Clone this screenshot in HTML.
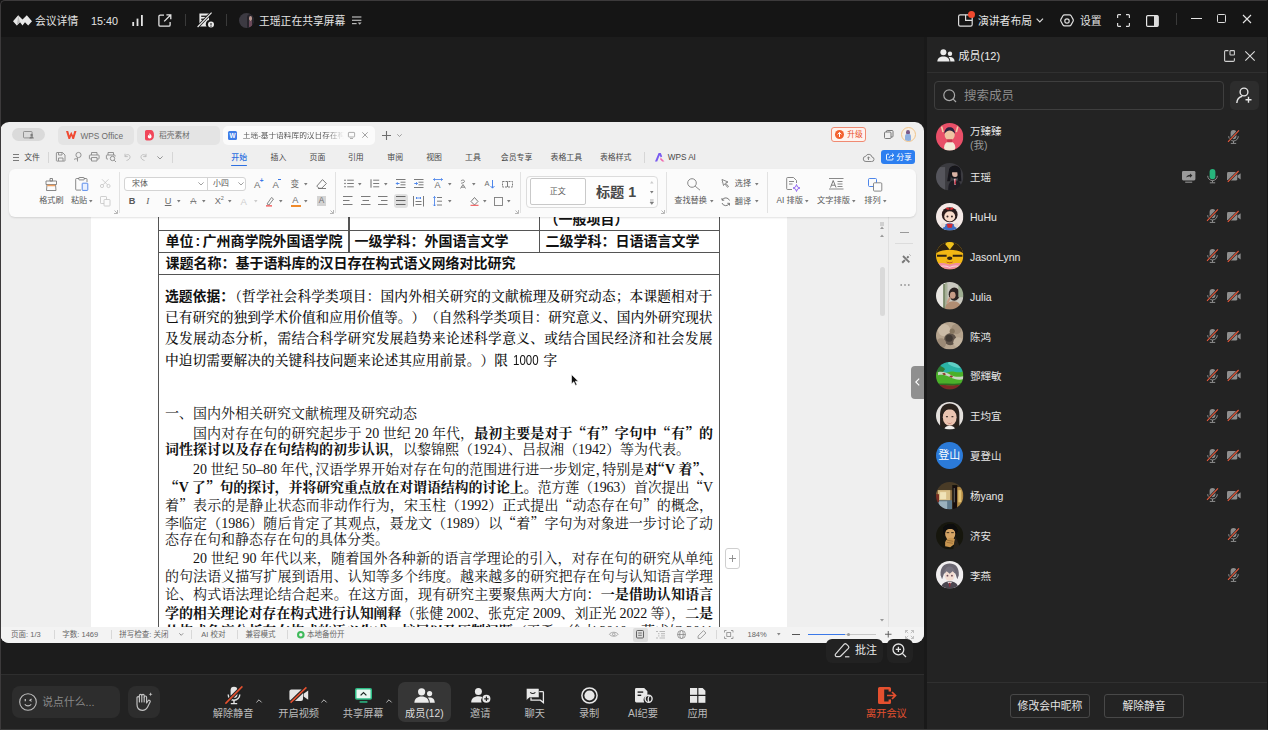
<!DOCTYPE html>
<html lang="zh-CN">
<head>
<meta charset="utf-8">
<title>腾讯会议</title>
<style>
*{box-sizing:border-box;margin:0;padding:0}
html,body{width:1268px;height:730px;overflow:hidden;background:#1c1c1c}
body{position:relative;font-family:"Liberation Sans","Noto Sans CJK SC",sans-serif;color:#e6e6e6;font-size:11px;line-height:1}
.abs{position:absolute}
svg{position:absolute;overflow:visible}
.t{position:absolute;white-space:nowrap;line-height:1}
/* ---------- meeting chrome ---------- */
#topbar{position:absolute;left:0;top:0;width:1268px;height:37px;background:#151515}
#stage{position:absolute;left:0;top:37px;width:926px;height:637px;background:#1c1c1c}
#toolbar{position:absolute;left:0;top:674px;width:926px;height:56px;background:#222222;border-top:1px solid #2e2e2e}
#panel{position:absolute;left:926px;top:37px;width:342px;height:693px;background:#232323}
#frame{position:absolute;left:0;top:0;width:1268px;height:730px;border:1px solid #3c3a3b;border-right:1.500px solid #161616;border-bottom:1.500px solid #3a3a3a;border-radius:5px 2px 0 0;pointer-events:none;z-index:50}
.sep{position:absolute;width:1px;background:#3a3a3a}
/* ---------- WPS window ---------- */
.q{font-family:"Noto Serif CJK SC",serif}
.ln b{font-weight:700}
#wps{position:absolute;left:0;top:122px;width:924px;height:521px;background:#efefef;border-radius:9px;overflow:hidden;color:#484848}
</style>
</head>
<body>
<div id="topbar">
<!-- logo -->
<svg style="left:13px;top:15px" width="19" height="11" viewBox="0 0 19 11"><path d="M0 6.2 L5.2 0.3 L9.5 4.6 L13.8 0.3 L19 6.2 L15.2 10.4 L12 7.2 L9.5 10.4 L7 7.2 L3.8 10.4 Z" fill="#e8e8e8"/><path d="M5.2 0.3 L7 7.2 L3.8 10.4Z" fill="#bdbdbd"/></svg>
<span class="t" style="left:35px;top:16px;font-size:10.8px;color:#e4e4e4">会议详情</span>
<span class="t" style="left:91px;top:16px;font-size:10.8px;color:#e4e4e4">15:40</span>
<!-- signal -->
<svg style="left:132px;top:15px" width="12" height="11" viewBox="0 0 12 11"><rect x="0.3" y="7" width="1.8" height="4" fill="#e4e4e4"/><rect x="4.6" y="3.6" width="1.8" height="7.4" fill="#e4e4e4"/><rect x="9" y="0" width="1.8" height="11" fill="#e4e4e4"/></svg>
<!-- external -->
<svg style="left:158px;top:14px" width="14" height="13" viewBox="0 0 14 13" fill="none" stroke="#e4e4e4" stroke-width="1.3"><path d="M6 1.2H2.2a1.3 1.3 0 0 0-1.3 1.3v8.4a1.3 1.3 0 0 0 1.3 1.3h8.6a1.3 1.3 0 0 0 1.3-1.3V8"/><path d="M6.2 7.4 12.6 1M8.4 0.8h4.4v4.4"/></svg>
<div class="sep" style="left:185px;top:14px;height:12px"></div>
<!-- recording off -->
<svg style="left:197px;top:12px" width="18" height="16" viewBox="0 0 18 16"><path d="M2.4 1.5h9.6v6.6a4 4 0 0 0-2.4 6.4H2.4z" fill="#e8e8e8"/><rect x="4.2" y="3.6" width="6" height="1.3" fill="#151515"/><rect x="4.2" y="6.6" width="4" height="1.3" fill="#151515"/><circle cx="14" cy="12.6" r="3" fill="#e8e8e8"/><path d="M14 11v2.2" stroke="#151515" stroke-width="1"/><circle cx="14" cy="14.2" r="0.6" fill="#151515"/><path d="M0.6 15 14.6 0.6" stroke="#151515" stroke-width="2.8"/><path d="M0.6 15 14.6 0.6" stroke="#e8e8e8" stroke-width="1.2"/></svg>
<div class="sep" style="left:226px;top:14px;height:12px"></div>
<!-- sharer avatar -->
<div class="abs" style="left:239px;top:13px;width:15px;height:15px;border-radius:50%;background:#3c3a42;overflow:hidden"><div class="abs" style="left:8px;top:1px;width:7px;height:15px;background:#26242b;border-radius:4px 4px 0 0"></div><div class="abs" style="left:9.5px;top:3px;width:3.5px;height:4.5px;background:#b9968f;border-radius:50%"></div><div class="abs" style="left:10px;top:8px;width:3px;height:6px;background:#6b4a5a"></div></div>
<span class="t" style="left:259px;top:16px;font-size:10.8px;color:#e4e4e4">王瑶正在共享屏幕</span>
<svg style="left:352px;top:16px" width="10" height="9" viewBox="0 0 10 9"><rect x="0" y="0.4" width="9.4" height="1.2" fill="#bbb"/><rect x="0" y="3.7" width="9.4" height="1.2" fill="#bbb"/><rect x="0" y="7" width="4.6" height="1.2" fill="#bbb"/><path d="M5.8 6.4h3.8L7.7 8.8z" fill="#bbb"/></svg>

<!-- right cluster -->
<svg style="left:958px;top:14px" width="15" height="13" viewBox="0 0 15 13" fill="none" stroke="#dcdcdc" stroke-width="1.2"><rect x="0.6" y="0.8" width="13.6" height="11.4" rx="1.6"/><path d="M7.6 0.8v5.6h6.6"/></svg>
<div class="abs" style="left:967.5px;top:11px;width:7px;height:7px;border-radius:50%;background:#f0492f"></div>
<span class="t" style="left:978px;top:16px;font-size:10.8px;color:#e4e4e4">演讲者布局</span>
<svg style="left:1036px;top:18px" width="8" height="5" viewBox="0 0 8 5" fill="none" stroke="#dcdcdc" stroke-width="1.2"><path d="M0.6 0.6 3.8 3.8 7 0.6"/></svg>
<!-- gear -->
<svg style="left:1060px;top:13.5px" width="14" height="14" viewBox="0 0 14 14" fill="none" stroke="#dcdcdc" stroke-width="1.2"><path d="M4.6 0.8h4.8a2 2 0 0 1 1.7 1l2 3.6a2 2 0 0 1 0 1.9l-2 3.6a2 2 0 0 1-1.7 1H4.6a2 2 0 0 1-1.7-1l-2-3.6a2 2 0 0 1 0-1.9l2-3.6a2 2 0 0 1 1.7-1z"/><circle cx="7" cy="7" r="2.2"/></svg>
<span class="t" style="left:1080px;top:16px;font-size:10.8px;color:#e4e4e4">设置</span>
<!-- fullscreen -->
<svg style="left:1117px;top:14px" width="13" height="13" viewBox="0 0 13 13" fill="none" stroke="#dcdcdc" stroke-width="1.2"><path d="M0.6 4V1.4a.8.8 0 0 1 .8-.8H4M9 .6h2.6a.8.8 0 0 1 .8.8V4M12.4 9v2.6a.8.8 0 0 1-.8.8H9M4 12.4H1.4a.8.8 0 0 1-.8-.8V9"/></svg>
<!-- side panel icon -->
<svg style="left:1146px;top:14.5px" width="13" height="12" viewBox="0 0 13 12"><rect x="0.6" y="0.6" width="11.6" height="10.8" rx="1.2" fill="none" stroke="#e8e8e8" stroke-width="1.2"/><path d="M8 0.6h3a1.2 1.2 0 0 1 1.2 1.2v8.4a1.2 1.2 0 0 1-1.2 1.2H8z" fill="#dcdcdc"/></svg>
<div class="sep" style="left:1176px;top:13px;height:12px"></div>
<div class="abs" style="left:1191px;top:18px;width:11px;height:1px;background:#e4e4e4"></div>
<div class="abs" style="left:1217px;top:14px;width:9px;height:9px;border:1.2px solid #dcdcdc;border-radius:1.5px"></div>
<svg style="left:1243px;top:15px" width="8" height="8" viewBox="0 0 8 8" stroke="#e4e4e4" stroke-width="1.1"><path d="M0 0 8 8M8 0 0 8"/></svg>
</div>
<div id="stage"></div>
<!--TB-->
<div id="toolbar">
<div class="abs" style="left:12px;top:11px;width:108px;height:32px;background:#2d2d2d;border-radius:8px"></div>
<svg style="left:19px;top:17.799999999999955px" width="18" height="18" viewBox="0 0 18 18" fill="none" stroke="#bdbdbd" stroke-width="1.100"><circle cx="9" cy="9" r="8.300"/><path d="M6.300 6v2.200" stroke-width="1.300"/><path d="M12.600 6 10.800 7.200 12.600 8.400"/><path d="M5.800 11.200c1.600 2.200 4.800 2.200 6.400 0"/></svg>
<span class="t" style="left:42.300px;top:22.100000000000023px;font-size:10.800px;color:#8a8a8a">说点什么...</span>
<div class="abs" style="left:127.700px;top:11px;width:32px;height:32px;background:#2d2d2d;border-radius:8px"></div>
<svg style="left:136.400px;top:17.299999999999955px" width="17" height="19" viewBox="0 0 17 19" fill="none" stroke="#c4c4c4" stroke-width="1.150" stroke-linejoin="round" stroke-linecap="round"><path d="M1 11.500V5.800a1.200 1.200 0 0 1 2.400 0V3.600a1.200 1.200 0 0 1 2.400 0a1.200 1.200 0 0 1 2.400 0V5.200a1.200 1.200 0 0 1 2.400 0V11l1.500-2.200a1.150 1.150 0 0 1 2 1.200l-2.500 5c-1 2-2.600 3.300-5.300 3.300C3 18.300 1 15.900 1 12.600z"/><path d="M3.400 6v4M5.800 3.800V10M8.200 5.400V10"/><path d="M14.600 0.300l.55 1.450 1.450.55-1.450.55-.55 1.450-.55-1.450-1.450-.55 1.450-.55z" fill="#c4c4c4" stroke="none"/></svg>
<svg style="left:224.500px;top:11.200000000000045px" width="18" height="19" viewBox="0 0 18 19"><rect x="5.600" y="0.800" width="6.800" height="11" rx="3.400" fill="#e4e4e4"/><path d="M3.200 8.400a5.800 5.800 0 0 0 11.600 0" fill="none" stroke="#e4e4e4" stroke-width="1.400"/><path d="M9 14.400v3M5.800 17.600h6.400" stroke="#e4e4e4" stroke-width="1.400"/><path d="M0.400 17.600 17.400 0.400" stroke="#222" stroke-width="3.600"/><path d="M0.400 17.600 17.400 0.400" stroke="#e5502f" stroke-width="1.500"/></svg>
<span class="t" style="left:193.1px;width:80px;text-align:center;top:33.7px;font-size:10.200px;color:#bcbcbc">解除静音</span>
<svg style="left:256px;top:24px" width="6" height="4" viewBox="0 0 6 4" fill="none" stroke="#bdbdbd" stroke-width="1"><path d="M0.400 3.400 3 0.800 5.600 3.400"/></svg>
<svg style="left:289px;top:12px" width="20" height="16" viewBox="0 0 20 16"><rect x="0.400" y="2.400" width="13.600" height="11.600" rx="2" fill="#e4e4e4"/><path d="M14.600 6.800 19.200 3.600v9.200l-4.600-3.200z" fill="#e4e4e4"/><path d="M1.600 15.600 17.400 0.400" stroke="#222" stroke-width="3.600"/><path d="M1.600 15.600 17.400 0.400" stroke="#e5502f" stroke-width="1.500"/></svg>
<span class="t" style="left:258.7px;width:80px;text-align:center;top:33.7px;font-size:10.200px;color:#bcbcbc">开启视频</span>
<svg style="left:320.8px;top:24px" width="6" height="4" viewBox="0 0 6 4" fill="none" stroke="#bdbdbd" stroke-width="1"><path d="M0.400 3.400 3 0.800 5.600 3.400"/></svg>
<svg style="left:355.300px;top:13px" width="17" height="15" viewBox="0 0 17 15"><rect x="0" y="0" width="17" height="11.800" rx="1.800" fill="#2dbd86"/><rect x="1.500" y="1.500" width="14" height="8.800" rx=".6" fill="#e9f7f1"/><path d="M5.600 7.400 8.500 4.600 11.400 7.400" fill="none" stroke="#1f2a26" stroke-width="1.300"/><rect x="4.600" y="13.200" width="7.800" height="1.500" fill="#2dbd86"/></svg>
<span class="t" style="left:323.2px;width:80px;text-align:center;top:33.7px;font-size:10.200px;color:#bcbcbc">共享屏幕</span>
<svg style="left:386px;top:24px" width="6" height="4" viewBox="0 0 6 4" fill="none" stroke="#bdbdbd" stroke-width="1"><path d="M0.400 3.400 3 0.800 5.600 3.400"/></svg>
<div class="abs" style="left:398px;top:7px;width:53.300px;height:39.600px;background:#363636;border-radius:7px"></div>
<svg style="left:414px;top:13px" width="21" height="15" viewBox="0 0 21 15"><circle cx="7.600" cy="3.800" r="3.600" fill="#ececec"/><path d="M0.400 14.800c0-4 3-6.200 7.200-6.200s7.200 2.200 7.200 6.200z" fill="#ececec"/><circle cx="15.600" cy="5.600" r="2.600" fill="#ececec"/><path d="M15.800 14.800c0-2.400-.7-4-2-5.100.6-.2 1.100-.3 1.800-.3 3 0 5.200 1.800 5.200 5.400z" fill="#ececec"/></svg>
<span class="t" style="left:384.3px;width:80px;text-align:center;top:33.7px;font-size:10.200px;color:#dcdcdc">成员(12)</span>
<svg style="left:471px;top:13.399999999999977px" width="20" height="15" viewBox="0 0 20 15"><circle cx="7.400" cy="3.600" r="3.500" fill="#e8e8e8"/><path d="M0.200 14.400c0-4 3-6.200 7.200-6.200 1.500 0 2.800.3 3.900.8a5.400 5.400 0 0 0-.7 5.400z" fill="#e8e8e8"/><circle cx="15.400" cy="10.800" r="4" fill="#e8e8e8"/><circle cx="15.400" cy="10.800" r="4" fill="none" stroke="#222" stroke-width="0"/><path d="M15.400 8.600v4.400M13.200 10.800h4.400" stroke="#222" stroke-width="1.200"/></svg>
<span class="t" style="left:440.3px;width:80px;text-align:center;top:33.7px;font-size:10.200px;color:#bcbcbc">邀请</span>
<svg style="left:526px;top:13.399999999999977px" width="18" height="15" viewBox="0 0 18 15"><path d="M5 3.600h11.600a.8.800 0 0 1 .8.800v10.200l-3-2.400H5z" fill="none" stroke="#e8e8e8" stroke-width="1.300"/><path d="M0.400 1.200a.8.800 0 0 1 .8-.8h11a.8.800 0 0 1 .8.800v8.400H3.600l-3.200 2.600z" fill="#e8e8e8" stroke="#222" stroke-width=".5"/><path d="M4.200 4.400c1.600 1.400 3.600 1.400 5.200 0" fill="none" stroke="#222" stroke-width="1.100"/></svg>
<span class="t" style="left:494.8px;width:80px;text-align:center;top:33.7px;font-size:10.200px;color:#bcbcbc">聊天</span>
<svg style="left:580.600px;top:12.399999999999977px" width="17" height="17" viewBox="0 0 17 17"><circle cx="8.500" cy="8.500" r="7.600" fill="none" stroke="#e8e8e8" stroke-width="1.500"/><circle cx="8.500" cy="8.500" r="5.100" fill="#e8e8e8"/></svg>
<span class="t" style="left:549.1px;width:80px;text-align:center;top:33.7px;font-size:10.200px;color:#bcbcbc">录制</span>
<svg style="left:635px;top:13.399999999999977px" width="18" height="15" viewBox="0 0 18 15"><path d="M1.400 0h7.800l3.200 3.200v4a4.800 4.800 0 0 0-3.200 7.200H1.400A1.400 1.400 0 0 1 0 13V1.400A1.400 1.400 0 0 1 1.400 0z" fill="#e8e8e8"/><rect x="2.600" y="3.400" width="5.600" height="1.400" fill="#222"/><rect x="2.600" y="6.600" width="3.600" height="1.400" fill="#222"/><circle cx="13.600" cy="10.800" r="3.500" fill="none" stroke="#e8e8e8" stroke-width="1.400"/><path d="M14.600 7.600c-1.600 1.800-1.600 4.600-.6 6.600" fill="none" stroke="#e8e8e8" stroke-width="1.300"/></svg>
<span class="t" style="left:603.0px;width:80px;text-align:center;top:33.7px;font-size:10.200px;color:#bcbcbc">AI纪要</span>
<svg style="left:690.200px;top:13.399999999999977px" width="16" height="15" viewBox="0 0 16 15"><rect x="0" y="0" width="7.200" height="6.800" fill="#e8e8e8"/><path d="M8.400 0h4.200L15.400 2.800v4H8.400z" fill="#e8e8e8"/><rect x="0" y="8" width="7.200" height="6.800" fill="#e8e8e8"/><rect x="8.400" y="8" width="7" height="6.800" fill="#e8e8e8"/></svg>
<span class="t" style="left:657.6px;width:80px;text-align:center;top:33.7px;font-size:10.200px;color:#bcbcbc">应用</span>
<svg style="left:878px;top:12.399999999999977px" width="19" height="17" viewBox="0 0 19 17"><path d="M1.600 0h9.800a1.600 1.600 0 0 1 1.600 1.600V4.400h-2.400V2.400H6.200v12.200h4.400V12.600H13v2.800a1.600 1.600 0 0 1-1.600 1.600H1.600A1.600 1.600 0 0 1 0 15.400V1.600A1.600 1.600 0 0 1 1.600 0z" fill="#e5502f"/><path d="M9 8.500h8M14 5l3.500 3.500L14 12" fill="none" stroke="#e5502f" stroke-width="1.700"/></svg>
<span class="t" style="left:846.4px;width:80px;text-align:center;top:33.7px;font-size:10.200px;color:#e5502f">离开会议</span>
</div>
<div class="abs" style="left:825.500px;top:638.500px;width:57.500px;height:24.500px;background:#222;border-radius:6px;z-index:5"></div>
<svg style="left:833.500px;top:642.500px;z-index:6" width="17" height="16" viewBox="0 0 17 16" fill="none" stroke="#dcdcdc" stroke-width="1.200" stroke-linejoin="round"><path d="M10.200 1.200a1.600 1.600 0 0 1 2.200 0l2 2a1.600 1.600 0 0 1 0 2.200l-7.600 7.600a2 2 0 0 1-1.400.6H2.800a1.600 1.600 0 0 1-1.300-2.500z"/><path d="M11 13.800h4.400"/></svg>
<span class="t" style="left:855px;top:645px;font-size:11px;color:#ececec;z-index:6">批注</span>
<div class="abs" style="left:887px;top:638.500px;width:25.500px;height:24.500px;background:#222;border-radius:6px;z-index:5"></div>
<svg style="left:892px;top:643px;z-index:6" width="15" height="15" viewBox="0 0 15 15" fill="none" stroke="#e4e4e4" stroke-width="1.300"><circle cx="6.400" cy="6.400" r="5.400"/><path d="M10.400 10.400 14 14M6.400 3.800v5.200M3.800 6.400h5.200"/></svg>
<!--/TB-->
<!--PANEL-->
<div id="panel">
<svg style="left:11px;top:12px" width="18" height="13" viewBox="0 0 18 13"><circle cx="6.400" cy="3.300" r="3" fill="#ececec"/><path d="M0.300 12.600c0-3.400 2.600-5.200 6.100-5.200s6.100 1.800 6.100 5.200z" fill="#ececec"/><circle cx="13" cy="4.800" r="2.200" fill="#ececec"/><path d="M13.300 12.600c0-2-.6-3.400-1.700-4.300.5-.1.900-.2 1.500-.2 2.600 0 4.500 1.500 4.500 4.500z" fill="#ececec"/></svg>
<span class="t" style="left:32.500px;top:13.500px;font-size:11px;color:#ececec">成员(12)</span>
<svg style="left:298px;top:13px" width="11" height="12" viewBox="0 0 11 12" fill="none" stroke="#cfcfcf" stroke-width="1.100"><path d="M4.400 0.600H1.700A1.100 1.100 0 0 0 .6 1.700v8.600a1.100 1.100 0 0 0 1.100 1.100h7.600a1.100 1.100 0 0 0 1.100-1.100V8.200"/><rect x="6" y="0.600" width="4.400" height="4.400" rx=".6"/></svg>
<svg style="left:318.500px;top:14px" width="10" height="10" viewBox="0 0 10 10" stroke="#dcdcdc" stroke-width="1.100"><path d="M0.300 0.300 9.700 9.700M9.700 0.300 0.300 9.700"/></svg>
<div class="abs" style="left:0;top:35px;width:342px;height:1px;background:#303030"></div>
<div class="abs" style="left:8px;top:43.500px;width:290px;height:29.500px;border:1px solid #3e3e3e;border-radius:4px"></div>
<svg style="left:17px;top:52px" width="14" height="14" viewBox="0 0 14 14" fill="none" stroke="#a8a8a8" stroke-width="1.200"><circle cx="6.200" cy="6.200" r="5.400"/><path d="M10.200 10.200 13 13"/></svg>
<span class="t" style="left:38px;top:52.500px;font-size:12.500px;color:#8c8c8c">搜索成员</span>
<div class="abs" style="left:303.500px;top:44px;width:29px;height:29px;background:#2d2d2d;border-radius:5px"></div>
<svg style="left:310px;top:50px" width="17" height="17" viewBox="0 0 17 17" fill="none" stroke="#e6e6e6" stroke-width="1.400"><circle cx="8" cy="5" r="3.900"/><path d="M0.800 16c.3-3.600 2.300-6 5.400-6.700"/><path d="M12.500 9.800v6M9.500 12.800h6"/></svg>
<svg width="0" height="0" style="left:0;top:0"><defs>
<g id="micoff"><rect x="2.600" y="0" width="5.800" height="9.200" rx="2.900" fill="#8f8f8f"/><path d="M0.700 6.200a4.800 4.800 0 0 0 9.600 0" fill="none" stroke="#8f8f8f" stroke-width="1"/><path d="M5.500 11v2.200M2.800 13.400h5.400" stroke="#8f8f8f" stroke-width="1"/><path d="M0 11.800 11 0.300" stroke="#232323" stroke-width="2.400"/><path d="M0 11.800 11 0.300" stroke="#ea5a3c" stroke-width="1.100"/></g>
<g id="micon"><rect x="2.600" y="0" width="5.800" height="10.200" rx="2.900" fill="#27b47c"/><path d="M0.700 6.800a4.800 4.800 0 0 0 9.600 0" fill="none" stroke="#8f8f8f" stroke-width="1"/><path d="M5.500 11.600v2M2.800 13.800h5.400" stroke="#8f8f8f" stroke-width="1"/></g>
<g id="camoff"><rect x="0" y="1" width="10.200" height="8.600" rx="1.400" fill="#8f8f8f"/><path d="M10.600 4.400 13.600 2.200v6.200l-3-2.200z" fill="#8f8f8f"/><path d="M0.800 10.800 11.600 0" stroke="#232323" stroke-width="2.400"/><path d="M0.800 10.800 11.600 0" stroke="#ea5a3c" stroke-width="1.100"/></g>
<g id="shareic"><rect x="0" y="0" width="13.400" height="9.400" rx="1.300" fill="#9a9a9a"/><rect x="3.200" y="10.600" width="7" height="1.200" fill="#8a8a8a"/><path d="M4.200 6.600c.6-2 2-2.800 3.800-2.800V2.400l2.400 2.200L8 6.800V5.400c-1.500 0-2.700.2-3.800 1.200z" fill="#2a2a2a"/></g>
<filter id="soft" x="-10%" y="-10%" width="120%" height="120%"><feGaussianBlur stdDeviation="0.55"/></filter>
</defs></svg>
<svg style="left:9.500px;top:85.8px" width="27.400" height="27.400" viewBox="0 0 27 27"><clipPath id="c0"><circle cx="13.500" cy="13.500" r="13.500"/></clipPath><g clip-path="url(#c0)"><g ><rect width="27" height="27" fill="#e94f68"/><ellipse cx="13.5" cy="24" rx="5.5" ry="6" fill="#f3ead8"/><path d="M7 9 5.5 3.5M20 9 21.5 3.5" stroke="#f0c9a8" stroke-width="1.6"/><ellipse cx="13.5" cy="11.5" rx="5" ry="5.6" fill="#efc4a2"/><path d="M8.3 10.5c0-4.4 2.4-6.3 5.2-6.3s5.2 1.9 5.2 6.3c-1.8-2.6-3.4-3.2-5.2-3.2s-3.4.6-5.2 3.2z" fill="#2d2340"/><rect x="11" y="16" width="5" height="3" fill="#c9384f"/></g></g></svg>
<span class="t" style="left:44px;top:88.5px;font-size:10.500px;color:#e6e6e6">万臻臻</span>
<span class="t" style="left:44px;top:102.5px;font-size:10.500px;color:#9a9a9a">(我)</span>
<svg style="left:302px;top:92.5px" width="11" height="14" viewBox="0 0 11 14"><use href="#micoff"/></svg>
<svg style="left:9.500px;top:125.7px" width="27.400" height="27.400" viewBox="0 0 27 27"><clipPath id="c1"><circle cx="13.500" cy="13.500" r="13.500"/></clipPath><g clip-path="url(#c1)"><g filter="url(#soft)"><rect width="27" height="27" fill="#3a3a40"/><rect x="0" y="4" width="9" height="23" fill="#55555c"/><path d="M12 27c0-7 2-10 6.5-10S25 20 25 27z" fill="#1d1c24"/><ellipse cx="18.5" cy="9" rx="5.6" ry="6.5" fill="#17151a"/><ellipse cx="18.8" cy="10" rx="3" ry="3.8" fill="#d9b3a5"/><path d="M17.6 15.5h2.4l-.5 6h-1.4z" fill="#e9e4e6"/><path d="M18.4 16h1l.4 4.5-.9 1-.9-1z" fill="#b0283c"/><path d="M13 6c1-4 9-4 11 0l1 12h-3l-1-9-6 0-1 9h-3z" fill="#17151a"/></g></g></svg>
<span class="t" style="left:44px;top:135.0px;font-size:10.500px;color:#e6e6e6">王瑶</span>
<svg style="left:255.800px;top:133.6px" width="14" height="12" viewBox="0 0 14 12"><use href="#shareic"/></svg>
<svg style="left:280.500px;top:132.0px" width="11" height="14" viewBox="0 0 11 14"><use href="#micon"/></svg>
<svg style="left:300.500px;top:134.0px" width="14" height="11" viewBox="0 0 14 11"><use href="#camoff"/></svg>
<svg style="left:9.500px;top:165.5px" width="27.400" height="27.400" viewBox="0 0 27 27"><clipPath id="c2"><circle cx="13.500" cy="13.500" r="13.500"/></clipPath><g clip-path="url(#c2)"><g ><rect width="27" height="27" fill="#f4e9e6"/><ellipse cx="13.5" cy="11.5" rx="7.8" ry="7.4" fill="#2a1c1c"/><ellipse cx="13.5" cy="13.2" rx="5.4" ry="5" fill="#f9dccb"/><path d="M9.6 5.2c1.4-1.8 2.8-.4 3.9.5 1.100-.9 2.500-2.300 3.900-.5-.5 1.700-2.200 1.700-3.900.9-1.700.8-3.400.8-3.900-.9z" fill="#d6282f"/><circle cx="11.300" cy="13.3" r="1" fill="#3a2a2a"/><circle cx="15.7" cy="13.3" r="1" fill="#3a2a2a"/><path d="M6.500 27c0-5 3-7 7-7s7 2 7 7z" fill="#3f6fc4"/><path d="M10.500 20.500h6l-1 4h-4z" fill="#d6282f"/><circle cx="7" cy="22" r="2.200" fill="#e8d9d4"/><circle cx="20" cy="22" r="2.200" fill="#e8d9d4"/></g></g></svg>
<span class="t" style="left:44px;top:174.8px;font-size:10.500px;color:#e6e6e6">HuHu</span>
<svg style="left:280.500px;top:172.2px" width="11" height="14" viewBox="0 0 11 14"><use href="#micoff"/></svg>
<svg style="left:300.500px;top:173.8px" width="14" height="11" viewBox="0 0 14 11"><use href="#camoff"/></svg>
<svg style="left:9.500px;top:205.4px" width="27.400" height="27.400" viewBox="0 0 27 27"><clipPath id="c3"><circle cx="13.500" cy="13.500" r="13.500"/></clipPath><g clip-path="url(#c3)"><g ><rect width="27" height="27" fill="#f2b714"/><path d="M0 0h27v11c-4-2.500-9-3.400-13.500-3.400S4 8.500 0 11z" fill="#2e2212"/><path d="M9 2 13.500 7.600 18 2l-2-2h-5z" fill="#f2c21c"/><path d="M1 12.500h9.500v2H1zM16.500 12.500H26v2h-9.500z" fill="#2e2212"/><ellipse cx="13.500" cy="16" rx="2.600" ry="1.700" fill="#2e2212"/><path d="M10 19c1.500 1.500 5.500 1.500 7 0-.5 2.500-6.500 2.500-7 0z" fill="#b4442a"/><path d="M0 22c4-2 9-1.500 13.500.3C18 20.500 23 20 27 22v5H0z" fill="#f08fa0"/><path d="M3 24.500c4-1.500 7-1 10.500.5 3.500-1.500 6.500-2 10.500-.5" stroke="#f8d5da" stroke-width="1" fill="none"/></g></g></svg>
<span class="t" style="left:44px;top:214.7px;font-size:10.500px;color:#e6e6e6">JasonLynn</span>
<svg style="left:280.500px;top:212.1px" width="11" height="14" viewBox="0 0 11 14"><use href="#micoff"/></svg>
<svg style="left:300.500px;top:213.7px" width="14" height="11" viewBox="0 0 14 11"><use href="#camoff"/></svg>
<svg style="left:9.500px;top:245.3px" width="27.400" height="27.400" viewBox="0 0 27 27"><clipPath id="c4"><circle cx="13.500" cy="13.500" r="13.500"/></clipPath><g clip-path="url(#c4)"><g filter="url(#soft)"><rect width="27" height="27" fill="#c9c8bf"/><rect x="0" y="0" width="9" height="27" fill="#e9e7e2"/><rect x="7" y="2" width="4" height="25" fill="#7d8b6c"/><rect x="9" y="0" width="2" height="27" fill="#a9b39a"/><ellipse cx="18" cy="12" rx="5.500" ry="6.500" fill="#2c2420"/><ellipse cx="16.500" cy="13" rx="2.800" ry="3.400" fill="#c79c86"/><path d="M9 27c0-5 3-8 8-8s8 3 8 8z" fill="#b08d72"/><rect x="22" y="3" width="5" height="12" fill="#9fae93"/><path d="M11 21l3-6" stroke="#c79c86" stroke-width="2"/></g></g></svg>
<span class="t" style="left:44px;top:254.6px;font-size:10.500px;color:#e6e6e6">Julia</span>
<svg style="left:280.500px;top:252.0px" width="11" height="14" viewBox="0 0 11 14"><use href="#micoff"/></svg>
<svg style="left:300.500px;top:253.6px" width="14" height="11" viewBox="0 0 14 11"><use href="#camoff"/></svg>
<svg style="left:9.500px;top:285.2px" width="27.400" height="27.400" viewBox="0 0 27 27"><clipPath id="c5"><circle cx="13.500" cy="13.500" r="13.500"/></clipPath><g clip-path="url(#c5)"><g filter="url(#soft)"><rect width="27" height="27" fill="#b6a48e"/><circle cx="8" cy="8" r="6" fill="#cbbba6"/><circle cx="20" cy="7" r="5" fill="#a3917c"/><circle cx="14" cy="17" r="6" fill="#5e5248"/><circle cx="13" cy="16" r="3.500" fill="#3f3832"/><circle cx="22" cy="20" r="5" fill="#c4b5a0"/><circle cx="5" cy="21" r="5" fill="#9c8a76"/><circle cx="16" cy="9" r="2.500" fill="#85745f"/></g></g></svg>
<span class="t" style="left:44px;top:294.5px;font-size:10.500px;color:#e6e6e6">陈鸿</span>
<svg style="left:280.500px;top:291.9px" width="11" height="14" viewBox="0 0 11 14"><use href="#micoff"/></svg>
<svg style="left:300.500px;top:293.5px" width="14" height="11" viewBox="0 0 14 11"><use href="#camoff"/></svg>
<svg style="left:9.500px;top:325.0px" width="27.400" height="27.400" viewBox="0 0 27 27"><clipPath id="c6"><circle cx="13.500" cy="13.500" r="13.500"/></clipPath><g clip-path="url(#c6)"><g filter="url(#soft)"><rect width="27" height="27" fill="#4bb02a"/><path d="M0 0h27v9c-5 3-10-1-15 1S4 8 0 6z" fill="#2bb3a6"/><path d="M12 0h15v5c-5 2-10 0-15-3z" fill="#5fd0c6"/><path d="M0 3c3 0 6 1 9 4l-3 4-6-2z" fill="#2f7d35"/><path d="M2 10c5-1 9 1 13 3s7 2 12 1v3c-5 1-9 0-13-2S7 12 2 13z" fill="#c9d6c4"/><path d="M6 11.500l2-1 2 1.500-2 1zM13 14l2-1 2 1.500-2 1z" fill="#8d3a2a"/><path d="M0 23c6-1 14 1 27-1v5H0z" fill="#7d2a25"/><path d="M0 21.500c8-1 16 1 27-1v1.500c-11 2-19 0-27 1z" fill="#2e6b23"/></g></g></svg>
<span class="t" style="left:44px;top:334.3px;font-size:10.500px;color:#e6e6e6">鄧輝敏</span>
<svg style="left:280.500px;top:331.7px" width="11" height="14" viewBox="0 0 11 14"><use href="#micoff"/></svg>
<svg style="left:300.500px;top:333.3px" width="14" height="11" viewBox="0 0 14 11"><use href="#camoff"/></svg>
<svg style="left:9.500px;top:364.9px" width="27.400" height="27.400" viewBox="0 0 27 27"><clipPath id="c7"><circle cx="13.500" cy="13.500" r="13.500"/></clipPath><g clip-path="url(#c7)"><g filter="url(#soft)"><rect width="27" height="27" fill="#e4e0dd"/><path d="M4 27V12C4 5 8 1.500 13.500 1.500S23 5 23 12v15z" fill="#2a211f"/><ellipse cx="13.500" cy="15" rx="6.800" ry="8.500" fill="#ecc4b0"/><path d="M6.500 13c0-6 3-8.500 7-8.500s7 2.500 7 8.500c-1.500-3.500-3-5.500-7-5.500s-5.500 2-7 5.500z" fill="#2a211f"/><ellipse cx="10.800" cy="14.500" rx="1.100" ry=".6" fill="#3b2a26"/><ellipse cx="16.200" cy="14.500" rx="1.100" ry=".6" fill="#3b2a26"/><path d="M11 20c1.500 1.300 3.500 1.300 5 0-.8 1.800-4.200 1.800-5 0z" fill="#b8564f"/><path d="M8 27c1-3 3-3.500 5.500-3.500S18 24 19 27z" fill="#f2eeea"/></g></g></svg>
<span class="t" style="left:44px;top:374.2px;font-size:10.500px;color:#e6e6e6">王均宜</span>
<svg style="left:280.500px;top:371.6px" width="11" height="14" viewBox="0 0 11 14"><use href="#micoff"/></svg>
<svg style="left:300.500px;top:373.2px" width="14" height="11" viewBox="0 0 14 11"><use href="#camoff"/></svg>
<div class="abs" style="left:9.500px;top:404.8px;width:27.400px;height:27.400px;border-radius:50%;background:#2b7ad8;color:#fff;font-size:11px;line-height:27.400px;text-align:center;letter-spacing:0">登山</div>
<span class="t" style="left:44px;top:414.1px;font-size:10.500px;color:#e6e6e6">夏登山</span>
<svg style="left:280.500px;top:411.5px" width="11" height="14" viewBox="0 0 11 14"><use href="#micoff"/></svg>
<svg style="left:300.500px;top:413.1px" width="14" height="11" viewBox="0 0 14 11"><use href="#camoff"/></svg>
<svg style="left:9.500px;top:444.6px" width="27.400" height="27.400" viewBox="0 0 27 27"><clipPath id="c9"><circle cx="13.500" cy="13.500" r="13.500"/></clipPath><g clip-path="url(#c9)"><g filter="url(#soft)"><rect width="27" height="27" fill="#8a6a3c"/><rect x="0" y="0" width="27" height="8" fill="#4a3a25"/><rect x="2" y="8" width="12" height="10" fill="#d9c089"/><rect x="4" y="10" width="6" height="7" fill="#f0e3b8"/><rect x="0" y="18" width="16" height="9" fill="#5f7a8c"/><rect x="3" y="19" width="8" height="8" fill="#9bb1bd"/><rect x="16" y="3" width="5" height="24" fill="#15110e"/><rect x="21" y="5" width="6" height="22" fill="#b28a45"/><rect x="22" y="8" width="3" height="12" fill="#e2c274"/><rect x="17.500" y="6" width="1" height="14" fill="#6f6a66"/><rect x="0" y="12" width="3" height="8" fill="#7a2f22"/></g></g></svg>
<span class="t" style="left:44px;top:453.9px;font-size:10.500px;color:#e6e6e6">杨yang</span>
<svg style="left:280.500px;top:451.3px" width="11" height="14" viewBox="0 0 11 14"><use href="#micoff"/></svg>
<svg style="left:300.500px;top:452.9px" width="14" height="11" viewBox="0 0 14 11"><use href="#camoff"/></svg>
<svg style="left:9.500px;top:484.5px" width="27.400" height="27.400" viewBox="0 0 27 27"><clipPath id="c10"><circle cx="13.500" cy="13.500" r="13.500"/></clipPath><g clip-path="url(#c10)"><g filter="url(#soft)"><rect width="27" height="27" fill="#141410"/><path d="M7 9C7 4 10 2 14 2s7 2 7 7l-1 3H8z" fill="#0c0b08"/><ellipse cx="14" cy="11.500" rx="5" ry="6.300" fill="#d6a565"/><path d="M8.500 10c.5-4.500 3-6 5.500-6s5 1.500 5.500 6c-2-2.500-3.500-3-5.500-3s-3.500.5-5.500 3z" fill="#0c0b08"/><path d="M9 20c1-3.500 4-5 7-4.500l3 1.500-1 5-4 3-5-1z" fill="#c99650"/><path d="M11 18l6 1M10.500 20l6 1" stroke="#8c6430" stroke-width=".7"/><path d="M10.500 10.500h2.500M15 10.500h2.500" stroke="#2b1f10" stroke-width=".9"/><path d="M19 14c2 4 4 8 5 13h-7z" fill="#26221a"/></g></g></svg>
<span class="t" style="left:44px;top:493.8px;font-size:10.500px;color:#e6e6e6">济安</span>
<svg style="left:302px;top:491.2px" width="11" height="14" viewBox="0 0 11 14"><use href="#micoff"/></svg>
<svg style="left:9.500px;top:524.4px" width="27.400" height="27.400" viewBox="0 0 27 27"><clipPath id="c11"><circle cx="13.500" cy="13.500" r="13.500"/></clipPath><g clip-path="url(#c11)"><g ><rect width="27" height="27" fill="#f1eff0"/><path d="M4.500 14C4 6 8 2.500 13.500 2.500S23 6 22.500 14l-1.500 4-2-6-5.500-2-5.500 2-2 6z" fill="#6b6772"/><ellipse cx="13.500" cy="14" rx="5" ry="5.500" fill="#f3ddd2"/><path d="M7.500 13c1-5 3-7.500 6-7.500s5 2.500 6 7.500l-3-3-3 2.500-3-2.500z" fill="#77737f"/><circle cx="11.300" cy="14.500" r=".9" fill="#6a4a58"/><circle cx="15.700" cy="14.500" r=".9" fill="#6a4a58"/><path d="M5 27c.5-5 4-7 8.500-7s8 2 8.500 7z" fill="#4a4650"/><path d="M11 20.500l2.500 3 2.500-3z" fill="#efe9ea"/><path d="M12.500 21.500h2l-.3 4h-1.400z" fill="#8a2f3a"/></g></g></svg>
<span class="t" style="left:44px;top:533.7px;font-size:10.500px;color:#e6e6e6">李燕</span>
<svg style="left:302px;top:531.1px" width="11" height="14" viewBox="0 0 11 14"><use href="#micoff"/></svg>
<div class="abs" style="left:0;top:645px;width:342px;height:1px;background:#303030"></div>
<div class="abs" style="left:84px;top:656.500px;width:80px;height:24px;border:1px solid #484848;border-radius:3px;font-size:10.800px;line-height:22px;text-align:center;color:#e4e4e4">修改会中昵称</div>
<div class="abs" style="left:178px;top:656.500px;width:80px;height:24px;border:1px solid #484848;border-radius:3px;font-size:10.800px;line-height:22px;text-align:center;color:#e4e4e4">解除静音</div>
</div>
<!--/PANEL-->
<!--WPS-->
<div id="wps">
<!--DOC-->
<div id="doc" class="abs" style="left:0;top:78px;width:924px;height:427px;overflow:hidden;z-index:0">
<div class="abs" style="left:91px;top:0;width:695.600px;height:430px;background:#fff"></div>
<div class="abs" style="left:159px;top:29.6px;width:561px;height:1.200px;background:#555"></div>
<div class="abs" style="left:159px;top:51.6px;width:561px;height:1.200px;background:#555"></div>
<div class="abs" style="left:159px;top:73.8px;width:561px;height:1.200px;background:#555"></div>
<div class="abs" style="left:157.9px;top:0.0px;width:1.200px;height:430.0px;background:#555"></div>
<div class="abs" style="left:719.3px;top:0.0px;width:1.200px;height:430.0px;background:#555"></div>
<div class="abs" style="left:348.4px;top:0.0px;width:1.200px;height:52.1px;background:#555"></div>
<div class="abs" style="left:538.5px;top:0.0px;width:1.200px;height:52.1px;background:#555"></div>
<div class="abs ln" style="left:544.6px;top:8.8px;height:20px;line-height:20px;font-size:14px;font-family:'Liberation Sans','Noto Sans CJK SC',sans-serif;font-weight:700;color:#111;white-space:nowrap;letter-spacing:0px">（一般项目）</div>
<div class="abs ln" style="left:165.4px;top:30.6px;height:20px;line-height:20px;font-size:14px;font-family:'Liberation Sans','Noto Sans CJK SC',sans-serif;font-weight:700;color:#111;white-space:nowrap;letter-spacing:0px">单位<span style="display:inline-block;width:9px;text-align:center">:</span>广州商学院外国语学院</div>
<div class="abs ln" style="left:354.6px;top:30.6px;width:154.0px;text-align:justify;text-align-last:justify;height:20px;line-height:20px;font-size:14px;font-family:'Liberation Sans','Noto Sans CJK SC',sans-serif;font-weight:700;color:#111;white-space:nowrap;letter-spacing:0px">一级学科：外国语言文学</div>
<div class="abs ln" style="left:545.4px;top:30.6px;width:152.8px;text-align:justify;text-align-last:justify;height:20px;line-height:20px;font-size:14px;font-family:'Liberation Sans','Noto Sans CJK SC',sans-serif;font-weight:700;color:#111;white-space:nowrap;letter-spacing:0px">二级学科：日语语言文学</div>
<div class="abs ln" style="left:165.4px;top:53.2px;width:349.6px;text-align:justify;text-align-last:justify;height:20px;line-height:20px;font-size:14px;font-family:'Liberation Sans','Noto Sans CJK SC',sans-serif;font-weight:700;color:#111;white-space:nowrap;letter-spacing:0px">课题名称：基于语料库的汉日存在构式语义网络对比研究</div>
<div class="abs ln" style="left:165.0px;top:87.1px;width:547.5px;text-align:justify;text-align-last:justify;height:20px;line-height:20px;font-size:13.7px;font-family:'Liberation Serif','Noto Serif CJK SC',serif;font-weight:500;text-spacing-trim:space-all;color:#111;white-space:nowrap;letter-spacing:0px"><span style="font-family:'Liberation Sans','Noto Sans CJK SC',sans-serif;font-weight:700">选题依据：</span><span style="margin-left:-6px">（</span>哲学社会科学类项目：国内外相关研究的文献梳理及研究动态；本课题相对于</div>
<div class="abs ln" style="left:165.0px;top:108.1px;width:547.5px;text-align:justify;text-align-last:justify;height:20px;line-height:20px;font-size:13.7px;font-family:'Liberation Serif','Noto Serif CJK SC',serif;font-weight:500;text-spacing-trim:space-all;color:#111;white-space:nowrap;letter-spacing:0px">已有研究的独到学术价值和应用价值等。）（自然科学类项目：研究意义、国内外研究现状</div>
<div class="abs ln" style="left:165.0px;top:129.1px;width:547.5px;text-align:justify;text-align-last:justify;height:20px;line-height:20px;font-size:13.7px;font-family:'Liberation Serif','Noto Serif CJK SC',serif;font-weight:500;text-spacing-trim:space-all;color:#111;white-space:nowrap;letter-spacing:0px">及发展动态分析，需结合科学研究发展趋势来论述科学意义、或结合国民经济和社会发展</div>
<div class="abs ln" style="left:165.0px;top:150.2px;height:20px;line-height:20px;font-size:13.72px;font-family:'Liberation Serif','Noto Serif CJK SC',serif;font-weight:500;text-spacing-trim:space-all;color:#111;white-space:nowrap;letter-spacing:0px">中迫切需要解决的关键科技问题来论述其应用前景。）限<span style="display:inline-block;font-family:'Liberation Sans',sans-serif;font-weight:400;font-size:14px;letter-spacing:0;transform:scaleX(.82);transform-origin:0 50%;margin:0 -0.400px 0 4.800px">1000</span>字</div>
<div class="abs ln" style="left:165.0px;top:204.0px;width:251.5px;text-align:justify;text-align-last:justify;height:20px;line-height:20px;font-size:14px;font-family:'Liberation Serif','Noto Serif CJK SC',serif;color:#111;white-space:nowrap;letter-spacing:0px">一、国内外相关研究文献梳理及研究动态</div>
<div class="abs ln" style="left:193.0px;top:222.0px;width:520.0px;text-align:justify;text-align-last:justify;height:20px;line-height:20px;font-size:14px;font-family:'Liberation Serif','Noto Serif CJK SC',serif;color:#111;white-space:nowrap;letter-spacing:0px">国内对存在句的研究起步于 20 世纪 20 年代，<b>最初主要是对于<span class="q">“</span>有<span class="q">”</span>字句中<span class="q">“</span>有<span class="q">”</span>的</b></div>
<div class="abs ln" style="left:165.0px;top:240.0px;height:20px;line-height:20px;font-size:14px;font-family:'Liberation Serif','Noto Serif CJK SC',serif;color:#111;white-space:nowrap;letter-spacing:0px"><b>词性探讨以及存在句结构的初步认识</b>，以黎锦熙（1924）、吕叔湘（1942）等为代表。</div>
<div class="abs ln" style="left:193.0px;top:258.0px;width:520.0px;text-align:justify;text-align-last:justify;height:20px;line-height:20px;font-size:14px;font-family:'Liberation Serif','Noto Serif CJK SC',serif;color:#111;white-space:nowrap;letter-spacing:-0.02px">20 世纪 50–80 年代<span style="margin-right:-7.300px">，</span>汉语学界开始对存在句的范围进行进一步划定<span style="margin-right:-7.300px">，</span>特别是<b>对<span style="margin-left:-7.300px"><span class="q">“</span></span>V 着<span style="margin-right:-7.300px"><span class="q">”</span></span>、</b></div>
<div class="abs ln" style="left:165.0px;top:276.0px;width:548.0px;text-align:justify;text-align-last:justify;height:20px;line-height:20px;font-size:14px;font-family:'Liberation Serif','Noto Serif CJK SC',serif;color:#111;white-space:nowrap;letter-spacing:-0.19px"><b><span class="q">“</span>V 了<span class="q">”</span>句的探讨，并将研究重点放在对谓语结构的讨论上。</b>范方莲（1963）首次提出<span class="q">“</span>V</div>
<div class="abs ln" style="left:165.0px;top:294.0px;width:548.0px;text-align:justify;text-align-last:justify;height:20px;line-height:20px;font-size:14px;font-family:'Liberation Serif','Noto Serif CJK SC',serif;color:#111;white-space:nowrap;letter-spacing:0px">着<span class="q">”</span>表示的是静止状态而非动作行为，宋玉柱（1992）正式提出<span class="q">“</span>动态存在句<span class="q">”</span>的概念，</div>
<div class="abs ln" style="left:165.0px;top:312.0px;width:548.0px;text-align:justify;text-align-last:justify;height:20px;line-height:20px;font-size:14px;font-family:'Liberation Serif','Noto Serif CJK SC',serif;color:#111;white-space:nowrap;letter-spacing:0px">李临定（1986）随后肯定了其观点，聂龙文（1989）以<span class="q">“</span>着<span class="q">”</span>字句为对象进一步讨论了动</div>
<div class="abs ln" style="left:165.0px;top:330.0px;height:20px;line-height:20px;font-size:14px;font-family:'Liberation Serif','Noto Serif CJK SC',serif;color:#111;white-space:nowrap;letter-spacing:0px">态存在句和静态存在句的具体分类。</div>
<div class="abs ln" style="left:193.0px;top:349.0px;width:520.0px;text-align:justify;text-align-last:justify;height:20px;line-height:20px;font-size:14px;font-family:'Liberation Serif','Noto Serif CJK SC',serif;color:#111;white-space:nowrap;letter-spacing:0px">20 世纪 90 年代以来，随着国外各种新的语言学理论的引入，对存在句的研究从单纯</div>
<div class="abs ln" style="left:165.0px;top:367.0px;width:548.0px;text-align:justify;text-align-last:justify;height:20px;line-height:20px;font-size:14px;font-family:'Liberation Serif','Noto Serif CJK SC',serif;color:#111;white-space:nowrap;letter-spacing:0px">的句法语义描写扩展到语用、认知等多个纬度。越来越多的研究把存在句与认知语言学理</div>
<div class="abs ln" style="left:165.0px;top:385.0px;width:548.0px;text-align:justify;text-align-last:justify;height:20px;line-height:20px;font-size:14px;font-family:'Liberation Serif','Noto Serif CJK SC',serif;color:#111;white-space:nowrap;letter-spacing:0px">论、构式语法理论结合起来。在这方面，现有研究主要聚焦两大方向：<b>一是借助认知语言</b></div>
<div class="abs ln" style="left:165.0px;top:404.0px;width:548.0px;text-align:justify;text-align-last:justify;height:20px;line-height:20px;font-size:14px;font-family:'Liberation Serif','Noto Serif CJK SC',serif;color:#111;white-space:nowrap;letter-spacing:-0.12px"><b>学的相关理论对存在构式进行认知阐释</b>（张健 2002、张克定 2009、刘正光 2022 等），<b>二是</b></div>
<div class="abs ln" style="left:165.0px;top:422.0px;width:548.0px;text-align:justify;text-align-last:justify;height:20px;line-height:20px;font-size:14px;font-family:'Liberation Serif','Noto Serif CJK SC',serif;color:#111;white-space:nowrap;letter-spacing:-0.12px"><b>从构式角度分析存在构式的语义生成、扩展以及压制问题</b>（王勇、徐杰 2010；董成如 2011</div>
<div class="abs" style="left:725px;top:347.6px;width:15.200px;height:21px;border:1px solid #cfcfcf;border-radius:3px;background:#fff"></div>
<svg style="left:729.100px;top:354.6px" width="7" height="7" viewBox="0 0 7 7"><path d="M3.500 0v7M0 3.500h7" stroke="#888" stroke-width=".9"/></svg>
<svg style="left:570.600px;top:173.8px" width="8" height="12" viewBox="0 0 8 12"><path d="M.5.500v9.500l2.300-2.200 1.700 3.700 1.500-.7-1.700-3.600h3z" fill="#111" stroke="#fff" stroke-width=".6"/></svg>
<div class="abs" style="left:888px;top:0;width:1px;height:430px;background:#e0e0e0"></div>
<div class="abs" style="left:879.800px;top:67px;width:5px;height:49px;background:#dadada;border-radius:3px"></div>
<svg style="left:880.400px;top:21.5px" width="4" height="16" viewBox="0 0 4 16"><path d="M0 1h4M0 3h4" stroke="#999" stroke-width=".7"/><path d="M0 7h4L2 4.600z" fill="#999"/><path d="M0 15h4L2 12.600z" fill="#999"/></svg>
<svg style="left:880.400px;top:419px" width="4" height="3" viewBox="0 0 4 3"><path d="M0 0h4L2 2.600z" fill="#999"/></svg>
<div class="abs" style="left:899.800px;top:31.6px;width:9px;height:1px;background:#999"></div>
<div class="abs" style="left:895px;top:42.5px;width:18px;height:1px;background:#dcdcdc"></div>
<svg style="left:900.500px;top:54px" width="10" height="10" viewBox="0 0 10 10"><path d="M1.200 8.800 7.600 2.400" stroke="#777" stroke-width="2"/><path d="M2 2l6.400 6.400" stroke="#efefef" stroke-width="3"/><path d="M2 2l6.400 6.400" stroke="#777" stroke-width="1.800"/><path d="M8.600.600l.8.800" stroke="#777" stroke-width="1"/></svg>
<svg style="left:900.300px;top:84px" width="10" height="2" viewBox="0 0 10 2"><circle cx="1.200" cy="1" r=".9" fill="#999"/><circle cx="5" cy="1" r=".9" fill="#999"/><circle cx="8.800" cy="1" r=".9" fill="#999"/></svg>
<div class="abs" style="left:911.400px;top:166px;width:13px;height:32.500px;background:#8f8f8f;border-radius:4px 0 0 4px"></div>
<svg style="left:915px;top:178px" width="5" height="8" viewBox="0 0 5 8"><path d="M4.200.600.8 4l3.400 3.400" fill="none" stroke="#fff" stroke-width="1.100"/></svg>
</div>
<div class="abs" style="left:0.0px;top:504.7px;width:924.0px;height:16.3px;background:#f3f3f3;z-index:3"></div>
<span class="t" style="left:11.1px;top:508.5px;font-size:7.500px;color:#666;z-index:4">页面: 1/3</span>
<div class="abs" style="left:53.7px;top:507.5px;width:.8px;height:9.500px;background:#d8d8d8;z-index:4"></div>
<span class="t" style="left:62.3px;top:508.5px;font-size:7.500px;color:#666;z-index:4">字数: 1469</span>
<div class="abs" style="left:110.5px;top:507.5px;width:.8px;height:9.500px;background:#d8d8d8;z-index:4"></div>
<span class="t" style="left:119.3px;top:508.5px;font-size:7.500px;color:#666;z-index:4">拼写检查: 关闭</span>
<svg style="left:178.500px;top:511px;z-index:4" width="4.500" height="3" viewBox="0 0 4.500 3"><path d="M.3.300 2.250 2.300 4.200.3" fill="none" stroke="#777" stroke-width=".8"/></svg>
<div class="abs" style="left:190.9px;top:507.5px;width:.8px;height:9.500px;background:#d8d8d8;z-index:4"></div>
<span class="t" style="left:201.3px;top:508.5px;font-size:7.500px;color:#666;z-index:4">AI 校对</span>
<div class="abs" style="left:237.2px;top:507.5px;width:.8px;height:9.500px;background:#d8d8d8;z-index:4"></div>
<span class="t" style="left:245.4px;top:508.5px;font-size:7.500px;color:#666;z-index:4">兼容模式</span>
<div class="abs" style="left:287.2px;top:507.5px;width:.8px;height:9.500px;background:#d8d8d8;z-index:4"></div>
<svg style="left:296.500px;top:508.5px;z-index:4" width="7.600" height="7.600" viewBox="0 0 7.600 7.600"><circle cx="3.800" cy="3.800" r="3.800" fill="#3fba5a"/><circle cx="3.800" cy="3.800" r="1.700" fill="#f3f3f3"/></svg>
<span class="t" style="left:306.9px;top:508.5px;font-size:7.500px;color:#666;z-index:4">本地备份开</span>
<svg style="left:608.9px;top:509.0px;z-index:4" width="9.5" height="6.5" viewBox="0 0 9.5 6.5"><path d="M.4 3.250C2 .600 7.500.600 9.100 3.250 7.500 5.900 2 5.900.4 3.250z" fill="none" stroke="#999" stroke-width=".8"/><circle cx="4.750" cy="3.250" r="1.300" fill="none" stroke="#999" stroke-width=".8"/></svg>
<div class="abs" style="left:632.5px;top:505.5px;width:15.2px;height:14.0px;background:#dedede;border-radius:2px;z-index:4"></div>
<svg style="left:636.3px;top:508.3px;z-index:4" width="8" height="8.5" viewBox="0 0 8 8.5"><rect x=".5" y=".5" width="7" height="7.500" rx="1" fill="none" stroke="#555" stroke-width=".9"/><path d="M2.200 3h3.600M2.200 5.300h3.600" stroke="#555" stroke-width=".8"/></svg>
<svg style="left:656.0px;top:508.8px;z-index:4" width="9" height="7.5" viewBox="0 0 9 7.5"><path d="M0 .5h2M3.500 .5h5.500M2 2.700h1.500M5 2.700h4M2 4.900h1.500M5 4.900h4M0 7h2M3.500 7h5.500" stroke="#aaa" stroke-width=".8"/></svg>
<svg style="left:676.7px;top:508.2px;z-index:4" width="9" height="9" viewBox="0 0 9 9"><circle cx="4.500" cy="4.500" r="4" fill="none" stroke="#888" stroke-width=".8"/><ellipse cx="4.500" cy="4.500" rx="1.800" ry="4" fill="none" stroke="#888" stroke-width=".8"/><path d="M.5 4.500h8" stroke="#888" stroke-width=".8"/></svg>
<svg style="left:697.4px;top:508.2px;z-index:4" width="9.5" height="9" viewBox="0 0 9.5 9"><path d="M6.500.6 8.900 3 3.500 8.400H1.100V6z" fill="none" stroke="#888" stroke-width=".8" stroke-linejoin="round"/></svg>
<div class="abs" style="left:715.9px;top:507.5px;width:.8px;height:9.500px;background:#d8d8d8;z-index:4"></div>
<svg style="left:723.9px;top:508.2px;z-index:4" width="9.5" height="9" viewBox="0 0 9.5 9"><path d="M.5 2.500V.5h2M7 .5h2v2M9 6.500v2H7M2.500 8.500h-2v-2" fill="none" stroke="#888" stroke-width=".8"/><rect x="2.800" y="2.600" width="3.900" height="3.800" fill="none" stroke="#888" stroke-width=".8"/></svg>
<span class="t" style="left:747.5px;top:508.5px;font-size:7.500px;color:#666;z-index:4">184%</span>
<svg style="left:776.500px;top:511.3px;z-index:4" width="3.600" height="2.400" viewBox="0 0 3.600 2.400"><path d="M0 0h3.600L1.800 2.400z" fill="#888"/></svg>
<div class="abs" style="left:792.0px;top:511.9px;width:8.0px;height:1.0px;background:#555;z-index:4"></div>
<div class="abs" style="left:808.0px;top:511.9px;width:67.5px;height:0.8px;background:#c8c8c8;z-index:4"></div>
<div class="abs" style="left:808.0px;top:511.7px;width:37.4px;height:1.2px;background:#3a78e8;z-index:4"></div>
<div class="abs" style="left:846.8px;top:510.8px;width:3.0px;height:3.0px;background:#9a9a9a;border-radius:50%;z-index:4"></div>
<svg style="left:885.3px;top:509.2px;z-index:4" width="6.5" height="6.5" viewBox="0 0 6.5 6.5"><path d="M3.250 0v6.500M0 3.250h6.500" stroke="#555" stroke-width=".9"/></svg>
<svg style="left:904.5px;top:508.2px;z-index:4" width="9" height="9" viewBox="0 0 9 9"><path d="M.5 3V.5H3M6 .5h2.500V3M8.500 6v2.500H6M3 8.500H.5V6M.8.800l2.400 2.400M8.200.800 5.800 3.200M8.200 8.200 5.800 5.800M.8 8.200l2.400-2.400" fill="none" stroke="#aaa" stroke-width=".7"/></svg>
<!--/DOC-->
<div class="abs" style="left:11.7px;top:6.4px;width:33.3px;height:12.4px;background:#dadada;border-radius:7px"></div>
<svg style="left:22.5px;top:8.6px" width="11" height="8" viewBox="0 0 11 8" ><rect x="0.500" y="0.500" width="8.600" height="6.400" rx=".8" fill="none" stroke="#8a8a8a" stroke-width=".9"/><circle cx="8.600" cy="4" r="1.200" fill="#7c7c7c"/><path d="M6.400 7.600c0-1.600 1-2.200 2.200-2.200s2.200.6 2.200 2.200z" fill="#7c7c7c"/></svg>
<div class="abs" style="left:57.7px;top:4.0px;width:76.3px;height:18.6px;background:#e4e4e4;border-radius:5px"></div>
<svg style="left:66.3px;top:9.4px" width="10.5" height="8" viewBox="0 0 10.5 8" ><path d="M0 0h2.200l1.300 4.600L5.250 0.800 7 4.600 8.300 0h2.200L8 8H6.400L5.250 4.800 4.100 8H2.500z" fill="#f04a32"/></svg>
<span class="t" style="left:80.4px;top:9.8px;font-size:8.3px;color:#6c6c6c;">WPS Office</span>
<div class="abs" style="left:136.7px;top:4.0px;width:83.5px;height:18.6px;background:#e4e4e4;border-radius:5px"></div>
<svg style="left:145.4px;top:8.2px" width="9" height="10.4" viewBox="0 0 9 10.4" ><path d="M1.600 0h3.800C8 0 9 2 9 5.200S7.600 10.400 5 10.400H1.600A1.600 1.600 0 0 1 0 8.800V1.600A1.600 1.600 0 0 1 1.600 0z" fill="#f1465a"/><path d="M4.800 3c.4 1.400 1.800 1.800 1.800 3.600A2 2 0 0 1 4.600 8.600 2 2 0 0 1 2.800 6.600c0-.8.400-1.300.9-1.800.1.700.4 1 .8 1.100C4.300 4.800 4.300 3.800 4.800 3z" fill="#fff"/></svg>
<span class="t" style="left:159.0px;top:10.1px;font-size:7.7px;color:#6c6c6c;">稻壳素材</span>
<div class="abs" style="left:222.6px;top:4.0px;width:152.9px;height:18.6px;background:#fbfbfb;border-radius:5px"></div>
<div class="abs" style="left:228.0px;top:8.6px;width:9.4px;height:9.4px;background:#3f7de8;border-radius:1.500px"></div>
<span class="t" style="left:229.6px;top:10.7px;font-size:6.4px;color:#fff;font-weight:bold">W</span>
<span class="t" style="left:242.800px;top:9.5px;font-size:7.700px;color:#585858;width:101px;overflow:hidden;-webkit-mask-image:linear-gradient(90deg,#000 82%,transparent 100%);mask-image:linear-gradient(90deg,#000 82%,transparent 100%)">王瑶-基于语料库的汉日存在构式</span>
<svg style="left:348.4px;top:9.8px" width="7" height="7" viewBox="0 0 7 7" ><rect x=".4" y=".4" width="6.200" height="4.600" rx=".6" fill="none" stroke="#999" stroke-width=".8"/><path d="M2 6.500h3" stroke="#999" stroke-width=".8"/></svg>
<svg style="left:361.6px;top:10.3px" width="6" height="6" viewBox="0 0 6 6" ><path d="M0.300 0.300 5.700 5.700M5.700 0.300 0.300 5.700" stroke="#9a9a9a" stroke-width=".9"/></svg>
<svg style="left:381.8px;top:9.0px" width="9" height="9" viewBox="0 0 9 9" ><path d="M4.500 0v9M0 4.500h9" stroke="#6c6c6c" stroke-width="1.100"/></svg>
<svg style="left:396.6px;top:12.2px" width="5" height="3" viewBox="0 0 5 3" ><path d="M0.300 0.300 2.500 2.500 4.700 0.300" fill="none" stroke="#8a8a8a" stroke-width=".8"/></svg>
<div class="abs" style="left:830.9px;top:5.3px;width:35.5px;height:14.5px;background:#fff3ee;border:1px solid #f08a72;border-radius:3px"></div>
<svg style="left:834.6px;top:8.0px" width="9" height="9" viewBox="0 0 9 9" ><circle cx="4.500" cy="4.500" r="4.500" fill="#f2612f"/><path d="M4.500 7V2.600M2.600 4.400 4.500 2.400 6.400 4.400" fill="none" stroke="#fff" stroke-width="1"/></svg>
<span class="t" style="left:847.2px;top:9.3px;font-size:7.7px;color:#e8502a;">升级</span>
<svg style="left:883.5px;top:8.2px" width="9.5" height="9" viewBox="0 0 9.5 9" ><rect x=".5" y="2" width="6.500" height="6.500" rx="1" fill="none" stroke="#6c6c6c" stroke-width=".9"/><path d="M2.500 2V1.300a.8.800 0 0 1 .8-.8h4.900a.8.800 0 0 1 .8.8v4.900a.8.800 0 0 1-.8.800H7" fill="none" stroke="#6c6c6c" stroke-width=".9"/></svg>
<div class="abs" style="left:900.500px;top:5px;width:15px;height:15px;border-radius:50%;background:#f6efe6;border:1.200px solid #f0c48a;overflow:hidden"><div class="abs" style="left:4.500px;top:2px;width:4px;height:4.500px;border-radius:50%;background:#7a5a8a"></div><div class="abs" style="left:3.500px;top:6px;width:6px;height:8px;border-radius:2px 2px 0 0;background:#8fb0e0"></div></div>
<svg style="left:13.2px;top:31.8px" width="6" height="7" viewBox="0 0 6 7" ><path d="M0 .5h6M0 3.500h6M0 6.500h6" stroke="#6c6c6c" stroke-width=".9"/></svg>
<span class="t" style="left:24.2px;top:31.9px;font-size:7.9px;color:#484848;">文件</span>
<div class="abs" style="left:47.5px;top:29.5px;width:0.8px;height:11.5px;background:#d6d6d6"></div>
<svg style="left:56.4px;top:30.4px" width="9.5" height="9.5" viewBox="0 0 9.5 9.5" ><path d="M1 .5h5.500L9 3v5.500a.6.600 0 0 1-.6.600H1a.6.600 0 0 1-.6-.6V1A.6.600 0 0 1 1 .5zM2.500 .5v2.500h3.500V.5M2.500 9V6h4.500v3" fill="none" stroke="#8a8a8a" stroke-width=".9" stroke-linejoin="round"/></svg>
<svg style="left:73.4px;top:30.4px" width="9" height="9.5" viewBox="0 0 9 9.5" ><circle cx="5.500" cy="3" r="2.600" fill="none" stroke="#8a8a8a" stroke-width=".9" stroke-linejoin="round"/><path d="M4.500 5.500v4M1 7.500c1-1 3-1 3.500 0" fill="none" stroke="#8a8a8a" stroke-width=".9" stroke-linejoin="round"/></svg>
<svg style="left:89.0px;top:30.4px" width="10.5" height="9.5" viewBox="0 0 10.5 9.5" ><path d="M2.500 3V.5h5.500V3M2.500 7H1A.6.600 0 0 1 .4 6.400V3.600A.6.600 0 0 1 1 3h8.500a.6.600 0 0 1 .6.600v2.800a.6.600 0 0 1-.6.600H8M2.500 5.500h5.500V9H2.500z" fill="none" stroke="#8a8a8a" stroke-width=".9" stroke-linejoin="round"/></svg>
<svg style="left:105.6px;top:30.4px" width="10.5" height="9.5" viewBox="0 0 10.5 9.5" ><path d="M2 3V.5h5.500V3M2 7H1A.6.600 0 0 1 .4 6.400V3.600A.6.600 0 0 1 1 3h7.500a.6.600 0 0 1 .6.600V4.500" fill="none" stroke="#8a8a8a" stroke-width=".9" stroke-linejoin="round"/><circle cx="6.500" cy="6.500" r="2.200" fill="none" stroke="#8a8a8a" stroke-width=".9" stroke-linejoin="round"/><path d="M8.200 8.200 10 10" fill="none" stroke="#8a8a8a" stroke-width=".9" stroke-linejoin="round"/></svg>
<svg style="left:124.0px;top:31.0px" width="7" height="8" viewBox="0 0 7 8" ><path d="M1 3.500C2 1 5.500 1 6 3.500S4 7 2.500 7.500M1 .8v2.800h2.800" fill="none" stroke="#bbb" stroke-width=".9"/></svg>
<svg style="left:140.0px;top:31.0px" width="7" height="8" viewBox="0 0 7 8" ><path d="M6 3.500C5 1 1.500 1 1 3.500S3 7 4.500 7.500M6 .8v2.800H3.200" fill="none" stroke="#bbb" stroke-width=".9"/></svg>
<svg style="left:157.0px;top:33.7px" width="6" height="3.5" viewBox="0 0 6 3.5" ><path d="M0.400 0.400 3 3 5.600 0.400" fill="none" stroke="#8a8a8a" stroke-width=".9"/></svg>
<div class="abs" style="left:172.4px;top:29.5px;width:0.8px;height:11.5px;background:#d6d6d6"></div>
<span class="t" style="left:231.3px;top:31.9px;font-size:7.9px;color:#2d6fe0;font-weight:500">开始</span>
<span class="t" style="left:270.6px;top:31.9px;font-size:7.9px;color:#484848;">插入</span>
<span class="t" style="left:309.5px;top:31.9px;font-size:7.9px;color:#484848;">页面</span>
<span class="t" style="left:347.9px;top:31.9px;font-size:7.9px;color:#484848;">引用</span>
<span class="t" style="left:387.3px;top:31.9px;font-size:7.9px;color:#484848;">审阅</span>
<span class="t" style="left:426.2px;top:31.9px;font-size:7.9px;color:#484848;">视图</span>
<span class="t" style="left:465.1px;top:31.9px;font-size:7.9px;color:#484848;">工具</span>
<span class="t" style="left:500.8px;top:31.9px;font-size:7.9px;color:#484848;">会员专享</span>
<span class="t" style="left:550.5px;top:31.9px;font-size:7.9px;color:#484848;">表格工具</span>
<span class="t" style="left:599.9px;top:31.9px;font-size:7.9px;color:#484848;">表格样式</span>
<div class="abs" style="left:231.3px;top:42.6px;width:15.9px;height:1.7px;background:#2d6fe0;border-radius:1px"></div>
<div class="abs" style="left:643.8px;top:30.0px;width:0.8px;height:10.5px;background:#d6d6d6"></div>
<svg style="left:655.0px;top:31.0px" width="9.5" height="8.5" viewBox="0 0 9.5 8.5" ><path d="M0 8.500 3.600 0h2.200l1.400 3.400-1.500 1.200L4.700 2.200 2.200 8.500z" fill="#7a5cf0"/><path d="M5.800 4.800 9.500 8.500H7.200L5 6.200z" fill="#f06ab0"/></svg>
<span class="t" style="left:667.7px;top:31.7px;font-size:8.2px;color:#484848;">WPS AI</span>
<svg style="left:862.5px;top:30.5px" width="11" height="9" viewBox="0 0 11 9" ><path d="M3 8.500a2.600 2.600 0 0 1-.3-5.200 3.300 3.300 0 0 1 6.300.8A2.200 2.200 0 0 1 8.600 8.500z" fill="none" stroke="#7c7c7c" stroke-width=".9"/><path d="M5.500 7V4M4.200 5.200 5.500 3.900 6.800 5.200" fill="none" stroke="#7c7c7c" stroke-width=".9"/></svg>
<div class="abs" style="left:880.6px;top:27.7px;width:34.8px;height:14.6px;background:#2d7ff0;border-radius:3px"></div>
<svg style="left:885.5px;top:31.4px" width="8" height="7.5" viewBox="0 0 8 7.5" ><path d="M3 1.200H1.200a.7.700 0 0 0-.7.700v4.400a.7.700 0 0 0 .7.700h5a.7.700 0 0 0 .7-.7V5" fill="none" stroke="#fff" stroke-width=".9"/><path d="M3 5C3.400 3 5 2.200 7.600 2.200M6 .5l1.800 1.700L6 4" fill="none" stroke="#fff" stroke-width=".9"/></svg>
<span class="t" style="left:896.2px;top:31.7px;font-size:7.8px;color:#fff;">分享</span>
<div class="abs" style="left:8.5px;top:47.0px;width:907.3px;height:47.5px;background:#fbfbfb;border-radius:6px;box-shadow:0 1px 2px rgba(0,0,0,.12)"></div>
<svg style="left:44.5px;top:55.6px" width="12.5" height="13.5" viewBox="0 0 12.5 13.5" ><path d="M5 .5h2.500V3H5z" fill="none" stroke="#7c7c7c" stroke-width=".9"/><path d="M1 3h10.500v3.500H1z" fill="none" stroke="#7c7c7c" stroke-width=".9"/><path d="M2 6.500 1.500 12.500h9.500L10.500 6.500" fill="none" stroke="#7c7c7c" stroke-width=".9"/><path d="M2.200 7.500h8" stroke="#f0a060" stroke-width="1.600"/></svg>
<span class="t" style="left:39.2px;top:75.0px;font-size:8.1px;color:#585858;">格式刷</span>
<svg style="left:75.3px;top:55.3px" width="13.5" height="14" viewBox="0 0 13.5 14" ><path d="M4 1.500H1.500A.8.800 0 0 0 .7 2.300v10a.8.800 0 0 0 .8.800H6" fill="none" stroke="#7c7c7c" stroke-width=".9"/><path d="M9 1.500h2.200a.8.800 0 0 1 .8.800V5" fill="none" stroke="#7c7c7c" stroke-width=".9"/><rect x="3.800" y=".5" width="5.400" height="2.400" rx=".5" fill="none" stroke="#7c7c7c" stroke-width=".9"/><rect x="7.200" y="6.200" width="5.600" height="7.200" rx=".6" fill="#e8f0ff" stroke="#4a80e8" stroke-width=".9"/></svg>
<span class="t" style="left:71.0px;top:75.0px;font-size:8.1px;color:#585858;">粘贴</span>
<svg style="left:89.3px;top:77.5px" width="3.6" height="2.4" viewBox="0 0 3.6 2.4" ><path d="M0 0h3.600L1.800 2.400z" fill="#7c7c7c"/></svg>
<svg style="left:100.3px;top:57.3px" width="10.5" height="9" viewBox="0 0 10.5 9" ><circle cx="2" cy="7" r="1.600" fill="none" stroke="#c4c4c4" stroke-width=".8"/><circle cx="8.500" cy="7" r="1.600" fill="none" stroke="#c4c4c4" stroke-width=".8"/><path d="M3 5.800 8.500.3M7.500 5.800 2 .3" stroke="#c4c4c4" stroke-width=".8"/></svg>
<svg style="left:100.3px;top:73.6px" width="10.5" height="10.5" viewBox="0 0 10.5 10.5" ><rect x=".5" y=".5" width="6" height="7" rx=".6" fill="none" stroke="#c4c4c4" stroke-width=".8"/><rect x="4" y="3.500" width="6" height="6.500" rx=".6" fill="#fbfbfb" stroke="#c4c4c4" stroke-width=".8"/></svg>
<svg style="left:113.5px;top:88.3px" width="3.5" height="3.5" viewBox="0 0 3.5 3.5" ><path d="M0 3.500h3.500V0" fill="none" stroke="#999" stroke-width=".7"/><path d="M.5.500l2.500 2.500" stroke="#999" stroke-width=".7"/></svg>
<div class="abs" style="left:118.6px;top:50.0px;width:0.8px;height:40.6px;background:#e2e2e2"></div>
<div class="abs" style="left:124.2px;top:54.7px;width:122.3px;height:14.3px;border:1px solid #d4d4d4;border-radius:3px;background:#fff"></div>
<div class="abs" style="left:207.3px;top:54.7px;width:0.8px;height:14.3px;background:#d4d4d4"></div>
<span class="t" style="left:132.0px;top:58.4px;font-size:7.9px;color:#585858;">宋体</span>
<svg style="left:198.0px;top:60.3px" width="6" height="3.5" viewBox="0 0 6 3.5" ><path d="M0.400 0.400 3 3 5.600 0.400" fill="none" stroke="#888" stroke-width=".8"/></svg>
<span class="t" style="left:213.1px;top:58.4px;font-size:7.9px;color:#585858;">小四</span>
<svg style="left:237.5px;top:60.3px" width="6" height="3.5" viewBox="0 0 6 3.5" ><path d="M0.400 0.400 3 3 5.600 0.400" fill="none" stroke="#888" stroke-width=".8"/></svg>
<span class="t" style="left:253.9px;top:57.6px;font-size:9.5px;color:#6c6c6c;">A</span>
<span class="t" style="left:259.7px;top:55.9px;font-size:6.5px;color:#3a78e8;font-weight:bold">+</span>
<span class="t" style="left:272.4px;top:57.6px;font-size:9.5px;color:#6c6c6c;">A</span>
<div class="abs" style="left:278.4px;top:56.8px;width:3.1px;height:0.8px;background:#3a78e8"></div>
<span class="t" style="left:290.5px;top:58.1px;font-size:8.6px;color:#6c6c6c;">变</span>
<svg style="left:303.8px;top:61.0px" width="3.6" height="2.4" viewBox="0 0 3.6 2.4" ><path d="M0 0h3.600L1.800 2.400z" fill="#7c7c7c"/></svg>
<svg style="left:316.2px;top:56.8px" width="11" height="10" viewBox="0 0 11 10" ><path d="M6.500.6 10.400 4.500 5.600 9.300H3L.8 7.100z" fill="none" stroke="#6c6c6c" stroke-width=".9" stroke-linejoin="round"/><path d="M2 9.500h8" stroke="#6c6c6c" stroke-width=".9"/></svg>
<span class="t" style="left:128.8px;top:74.9px;font-size:9.2px;color:#585858;font-weight:bold">B</span>
<span class="t" style="left:146.2px;top:74.9px;font-size:9.2px;color:#585858;font-style:italic;font-family:'Liberation Serif',serif">I</span>
<span class="t" style="left:164.8px;top:74.5px;font-size:9.2px;color:#6c6c6c;text-decoration:underline">U</span>
<svg style="left:176.8px;top:78.0px" width="3.6" height="2.4" viewBox="0 0 3.6 2.4" ><path d="M0 0h3.600L1.800 2.400z" fill="#7c7c7c"/></svg>
<span class="t" style="left:190.3px;top:74.9px;font-size:9.2px;color:#7c7c7c;text-decoration:line-through">A</span>
<svg style="left:202.3px;top:78.0px" width="3.6" height="2.4" viewBox="0 0 3.6 2.4" ><path d="M0 0h3.600L1.800 2.400z" fill="#7c7c7c"/></svg>
<span class="t" style="left:214.8px;top:74.9px;font-size:9.2px;color:#6c6c6c;">X</span>
<span class="t" style="left:220.8px;top:73.6px;font-size:5.5px;color:#6c6c6c;">2</span>
<svg style="left:228.0px;top:78.0px" width="3.6" height="2.4" viewBox="0 0 3.6 2.4" ><path d="M0 0h3.600L1.800 2.400z" fill="#7c7c7c"/></svg>
<span class="t" style="left:240.4px;top:74.7px;font-size:9.6px;color:#cfcfcf;">A</span>
<svg style="left:253.5px;top:78.0px" width="3.6" height="2.4" viewBox="0 0 3.6 2.4" ><path d="M0 0h3.600L1.800 2.400z" fill="#ccc"/></svg>
<svg style="left:265.0px;top:73.8px" width="10" height="10" viewBox="0 0 10 10" ><path d="M2 8 6.500 1.500 8.500 3 4 9z" fill="none" stroke="#7c7c7c" stroke-width=".9"/><path d="M1 9.800h6" stroke="#f04a4a" stroke-width="1.300"/></svg>
<svg style="left:278.5px;top:78.0px" width="3.6" height="2.4" viewBox="0 0 3.6 2.4" ><path d="M0 0h3.600L1.800 2.400z" fill="#7c7c7c"/></svg>
<span class="t" style="left:292.3px;top:73.6px;font-size:9.2px;color:#6c6c6c;">A</span>
<div class="abs" style="left:290.8px;top:83.0px;width:9.8px;height:2.0px;background:#f08a2a"></div>
<svg style="left:304.3px;top:78.0px" width="3.6" height="2.4" viewBox="0 0 3.6 2.4" ><path d="M0 0h3.600L1.800 2.400z" fill="#7c7c7c"/></svg>
<div class="abs" style="left:316.9px;top:73.6px;width:9.4px;height:10.4px;background:#d4d4d4"></div>
<span class="t" style="left:318.8px;top:75.4px;font-size:8.2px;color:#6c6c6c;">A</span>
<svg style="left:329.5px;top:88.3px" width="3.5" height="3.5" viewBox="0 0 3.5 3.5" ><path d="M0 3.500h3.500V0" fill="none" stroke="#999" stroke-width=".7"/><path d="M.5.500l2.500 2.500" stroke="#999" stroke-width=".7"/></svg>
<div class="abs" style="left:335.0px;top:50.0px;width:0.8px;height:40.6px;background:#e2e2e2"></div>
<svg style="left:344.0px;top:57.3px" width="10" height="9" viewBox="0 0 10 9" ><circle cx="1" cy="1.200" r=".8" fill="#6c6c6c"/><circle cx="1" cy="4.500" r=".8" fill="#6c6c6c"/><circle cx="1" cy="7.800" r=".8" fill="#6c6c6c"/><path d="M3.200 1.200h6.600M3.200 4.500h6.600M3.200 7.800h6.600" stroke="#6c6c6c" stroke-width=".9"/></svg>
<svg style="left:358.3px;top:61.0px" width="3.6" height="2.4" viewBox="0 0 3.6 2.4" ><path d="M0 0h3.600L1.800 2.400z" fill="#7c7c7c"/></svg>
<svg style="left:369.9px;top:57.3px" width="9.5" height="9" viewBox="0 0 9.5 9" ><path d="M1 .3v8.400" stroke="#6c6c6c" stroke-width="1"/><path d="M3.200 1.200h6M3.200 4.500h6M3.200 7.800h6" stroke="#6c6c6c" stroke-width=".9"/></svg>
<svg style="left:383.8px;top:61.0px" width="3.6" height="2.4" viewBox="0 0 3.6 2.4" ><path d="M0 0h3.600L1.800 2.400z" fill="#7c7c7c"/></svg>
<svg style="left:395.8px;top:57.3px" width="9.5" height="9" viewBox="0 0 9.5 9" ><path d="M0 .5h9.500M4.500 3.200h5M4.500 5.800h5M0 8.500h9.500" stroke="#6c6c6c" stroke-width=".9"/><path d="M3.500 4.500H.3M1.600 3.200.3 4.500 1.600 5.800" fill="none" stroke="#3a78e8" stroke-width=".9"/></svg>
<svg style="left:414.0px;top:57.3px" width="9.5" height="9" viewBox="0 0 9.5 9" ><path d="M0 .5h9.500M4.500 3.200h5M4.500 5.800h5M0 8.500h9.500" stroke="#6c6c6c" stroke-width=".9"/><path d="M.3 4.500h3.200M2.200 3.200 3.500 4.500 2.200 5.800" fill="none" stroke="#3a78e8" stroke-width=".9"/></svg>
<span class="t" style="left:434.4px;top:59.1px;font-size:9px;color:#6c6c6c;">A</span>
<svg style="left:432.9px;top:56.3px" width="10" height="3" viewBox="0 0 10 3" ><path d="M.5 1.500h9M2 .3.500 1.500 2 2.700M8 .3l1.500 1.200L8 2.700" fill="none" stroke="#3a78e8" stroke-width=".8"/></svg>
<svg style="left:447.5px;top:61.0px" width="3.6" height="2.4" viewBox="0 0 3.6 2.4" ><path d="M0 0h3.600L1.800 2.400z" fill="#7c7c7c"/></svg>
<svg style="left:459.6px;top:57.0px" width="6" height="10" viewBox="0 0 6 10" ><path d="M1 2.200C1 .8 4.500.5 4.500 2.400 4.500 4 1 4 1 4.500M0.500 9.500 3 5.500l2.500 4M1.300 8.200h3.400" fill="none" stroke="#6c6c6c" stroke-width=".8"/></svg>
<svg style="left:472.2px;top:61.0px" width="3.6" height="2.4" viewBox="0 0 3.6 2.4" ><path d="M0 0h3.600L1.800 2.400z" fill="#7c7c7c"/></svg>
<span class="t" style="left:484.5px;top:58.4px;font-size:7.4px;color:#6c6c6c;">A</span>
<svg style="left:490.0px;top:57.5px" width="5" height="9" viewBox="0 0 5 9" ><path d="M2.500 0v8M.5 6l2 2.200L4.500 6" fill="none" stroke="#3a78e8" stroke-width=".9"/></svg>
<svg style="left:501.9px;top:58.5px" width="11" height="6.5" viewBox="0 0 11 6.5" ><rect x=".5" y=".5" width="10" height="5.500" fill="none" stroke="#6c6c6c" stroke-width=".9" stroke-dasharray="2 1"/><path d="M5.500 .5v5.500" stroke="#6c6c6c" stroke-width=".9"/></svg>
<svg style="left:342.8px;top:74.3px" width="9.5" height="9" viewBox="0 0 9.5 9" ><path d="M0 .5h9.500M0 4.500h6.500M0 8.500h9.500" stroke="#6c6c6c" stroke-width=".9"/></svg>
<svg style="left:360.6px;top:74.3px" width="9.5" height="9" viewBox="0 0 9.5 9" ><path d="M0 .5h9.500M1.500 4.500h6.500M0 8.500h9.500" stroke="#6c6c6c" stroke-width=".9"/></svg>
<svg style="left:378.0px;top:74.3px" width="9.5" height="9" viewBox="0 0 9.5 9" ><path d="M0 .5h9.500M3 4.500h6.500M0 8.500h9.500" stroke="#6c6c6c" stroke-width=".9"/></svg>
<div class="abs" style="left:393.6px;top:71.5px;width:14.9px;height:14.5px;background:#e0e0e0;border-radius:3px"></div>
<svg style="left:396.3px;top:74.3px" width="9.5" height="9" viewBox="0 0 9.5 9" ><path d="M0 .5h9.500M0 4.500h9.500M0 8.500h9.500" stroke="#585858" stroke-width=".9"/></svg>
<svg style="left:413.3px;top:73.5px" width="11" height="10.5" viewBox="0 0 11 10.5" ><path d="M.5 0v10.500M10.500 0v10.500M2.500 5.500h6M2.500 8.500h6" stroke="#6c6c6c" stroke-width=".9"/><path d="M3 2h5M4 1 3 2l1 1M7 1l1 1-1 1" fill="none" stroke="#3a78e8" stroke-width=".8"/></svg>
<svg style="left:432.9px;top:73.5px" width="9" height="10.5" viewBox="0 0 9 10.5" ><path d="M4 1.500h5M4 5.200h5M4 9h5" stroke="#6c6c6c" stroke-width=".9"/><path d="M1.500 .5v9.500M.3 1.800 1.500.5l1.200 1.300M.3 8.700l1.200 1.300 1.200-1.300" fill="none" stroke="#3a78e8" stroke-width=".8"/></svg>
<svg style="left:447.5px;top:78.0px" width="3.6" height="2.4" viewBox="0 0 3.6 2.4" ><path d="M0 0h3.600L1.800 2.400z" fill="#7c7c7c"/></svg>
<svg style="left:470.0px;top:74.0px" width="9" height="9.5" viewBox="0 0 9 9.5" ><path d="M1 5.500 4.500 1.500 8 5.500 4.500 9z" fill="none" stroke="#6c6c6c" stroke-width=".9"/><path d="M.5 9.300h8" stroke="#f04a4a" stroke-width="1"/></svg>
<svg style="left:482.5px;top:78.0px" width="3.6" height="2.4" viewBox="0 0 3.6 2.4" ><path d="M0 0h3.600L1.800 2.400z" fill="#7c7c7c"/></svg>
<svg style="left:493.6px;top:74.5px" width="9" height="9" viewBox="0 0 9 9" ><rect x=".5" y=".5" width="8" height="8" fill="none" stroke="#7c7c7c" stroke-width=".9"/></svg>
<svg style="left:507.3px;top:78.0px" width="3.6" height="2.4" viewBox="0 0 3.6 2.4" ><path d="M0 0h3.600L1.800 2.400z" fill="#7c7c7c"/></svg>
<svg style="left:515.0px;top:88.3px" width="3.5" height="3.5" viewBox="0 0 3.5 3.5" ><path d="M0 3.500h3.500V0" fill="none" stroke="#999" stroke-width=".7"/><path d="M.5.500l2.500 2.500" stroke="#999" stroke-width=".7"/></svg>
<div class="abs" style="left:520.4px;top:50.0px;width:0.8px;height:40.6px;background:#e2e2e2"></div>
<div class="abs" style="left:526.2px;top:53.5px;width:131.8px;height:32.6px;border:1px solid #dcdcdc;border-radius:4px;background:#fdfdfd"></div>
<div class="abs" style="left:529.8px;top:56.0px;width:56.2px;height:27.3px;border:1.500px solid #c9c9c9;border-radius:2px;background:#fff"></div>
<span class="t" style="left:549.8px;top:66.3px;font-size:8px;color:#585858;">正文</span>
<span class="t" style="left:595.9px;top:63.1px;font-size:14.2px;color:#484848;font-weight:bold">标题 1</span>
<svg style="left:649.6px;top:59.2px" width="3.6" height="2.4" viewBox="0 0 3.6 2.4" ><path d="M0 2.400h3.600L1.800 0z" fill="#ccc"/></svg>
<svg style="left:649.6px;top:69.4px" width="3.6" height="2.4" viewBox="0 0 3.6 2.4" ><path d="M0 0h3.600L1.800 2.400z" fill="#7c7c7c"/></svg>
<svg style="left:649.6px;top:77.5px" width="3.6" height="4.5" viewBox="0 0 3.6 4.5" ><path d="M0 0h3.600M0 2h3.600L1.800 4.400z" fill="#7c7c7c" stroke="#7c7c7c" stroke-width=".6"/></svg>
<svg style="left:661.0px;top:88.3px" width="3.5" height="3.5" viewBox="0 0 3.5 3.5" ><path d="M0 3.500h3.500V0" fill="none" stroke="#999" stroke-width=".7"/><path d="M.5.500l2.500 2.500" stroke="#999" stroke-width=".7"/></svg>
<div class="abs" style="left:665.5px;top:50.0px;width:0.8px;height:40.6px;background:#e2e2e2"></div>
<svg style="left:687.0px;top:56.0px" width="13.5" height="12.5" viewBox="0 0 13.5 12.5" ><circle cx="5" cy="5" r="4.300" fill="none" stroke="#7c7c7c" stroke-width=".9"/><path d="M8.200 8.200 13 12.200" stroke="#7c7c7c" stroke-width=".9"/></svg>
<span class="t" style="left:674.2px;top:75.1px;font-size:8.2px;color:#585858;">查找替换</span>
<svg style="left:710.3px;top:78.0px" width="3.6" height="2.4" viewBox="0 0 3.6 2.4" ><path d="M0 0h3.600L1.800 2.400z" fill="#7c7c7c"/></svg>
<svg style="left:721.4px;top:57.3px" width="9.5" height="9" viewBox="0 0 9.5 9" ><path d="M1 .5 7 3 4.500 4 7.500 7.500 6.500 8.300 3.800 4.800 2.500 6.500z" fill="none" stroke="#6c6c6c" stroke-width=".8" stroke-linejoin="round"/><path d="M0 1h.1M0 3.500h.1" stroke="#6c6c6c"/></svg>
<span class="t" style="left:734.8px;top:58.3px;font-size:8.1px;color:#585858;">选择</span>
<svg style="left:754.5px;top:61.0px" width="3.6" height="2.4" viewBox="0 0 3.6 2.4" ><path d="M0 0h3.600L1.800 2.400z" fill="#7c7c7c"/></svg>
<svg style="left:721.4px;top:74.5px" width="9.5" height="9.5" viewBox="0 0 9.5 9.5" ><path d="M8.500 3.500A4 4 0 0 0 1.200 3M1 6a4 4 0 0 0 7.300.5" fill="none" stroke="#6c6c6c" stroke-width=".9"/><path d="M1 1v2.200h2.200M8.500 8.500V6.300H6.300" fill="none" stroke="#6c6c6c" stroke-width=".9"/></svg>
<span class="t" style="left:734.8px;top:75.5px;font-size:8.1px;color:#585858;">翻译</span>
<svg style="left:754.5px;top:78.4px" width="3.6" height="2.4" viewBox="0 0 3.6 2.4" ><path d="M0 0h3.600L1.800 2.400z" fill="#7c7c7c"/></svg>
<div class="abs" style="left:767.0px;top:50.0px;width:0.8px;height:40.6px;background:#e2e2e2"></div>
<svg style="left:785.6px;top:55.3px" width="14.5" height="14" viewBox="0 0 14.5 14" ><path d="M10.500 6V3.500L7.500.5H1.500A.8.800 0 0 0 .7 1.300v10.400a.8.800 0 0 0 .8.800H6" fill="none" stroke="#7c7c7c" stroke-width=".9"/><path d="M3 4.500h5M3 7h3.500" stroke="#7c7c7c" stroke-width=".9"/><path d="M10.500 7.500l1 2.500 2.500 1-2.500 1-1 2.500-1-2.500-2.500-1 2.500-1z" fill="none" stroke="#8a5cf0" stroke-width=".9" stroke-linejoin="round"/></svg>
<span class="t" style="left:776.5px;top:75.1px;font-size:8.2px;color:#585858;">AI 排版</span>
<svg style="left:805.4px;top:78.0px" width="3.6" height="2.4" viewBox="0 0 3.6 2.4" ><path d="M0 0h3.600L1.800 2.400z" fill="#7c7c7c"/></svg>
<svg style="left:829.0px;top:56.3px" width="14.5" height="11.5" viewBox="0 0 14.5 11.5" ><path d="M0 .5h14.500M0 11h14.500" stroke="#7c7c7c" stroke-width=".9"/><path d="M1.500 9.500 4.200 2.500 7 9.500M2.500 7.200h3.500" fill="none" stroke="#6c6c6c" stroke-width=".9"/><path d="M8.500 3.500h5M8.500 6h5M8.500 8.500h5" stroke="#7c7c7c" stroke-width=".9"/></svg>
<span class="t" style="left:817.1px;top:75.1px;font-size:8.2px;color:#585858;">文字排版</span>
<svg style="left:852.4px;top:78.0px" width="3.6" height="2.4" viewBox="0 0 3.6 2.4" ><path d="M0 0h3.600L1.800 2.400z" fill="#7c7c7c"/></svg>
<svg style="left:868.3px;top:55.5px" width="14.5" height="13.5" viewBox="0 0 14.5 13.5" ><rect x=".5" y=".5" width="8" height="8" rx="1" fill="none" stroke="#3a78e8" stroke-width=".9"/><rect x="5.500" y="4.800" width="8.300" height="8.300" rx="1" fill="#fbfbfb" stroke="#7c7c7c" stroke-width=".9"/></svg>
<span class="t" style="left:864.3px;top:75.1px;font-size:8.2px;color:#585858;">排列</span>
<svg style="left:882.6px;top:78.0px" width="3.6" height="2.4" viewBox="0 0 3.6 2.4" ><path d="M0 0h3.600L1.800 2.400z" fill="#7c7c7c"/></svg>
</div>
<!--/WPS-->
<div id="gap" class="abs" style="left:924px;top:37px;width:2.500px;height:693px;background:#191919;z-index:2"></div>
<div id="frame"></div>
</body>
</html>
